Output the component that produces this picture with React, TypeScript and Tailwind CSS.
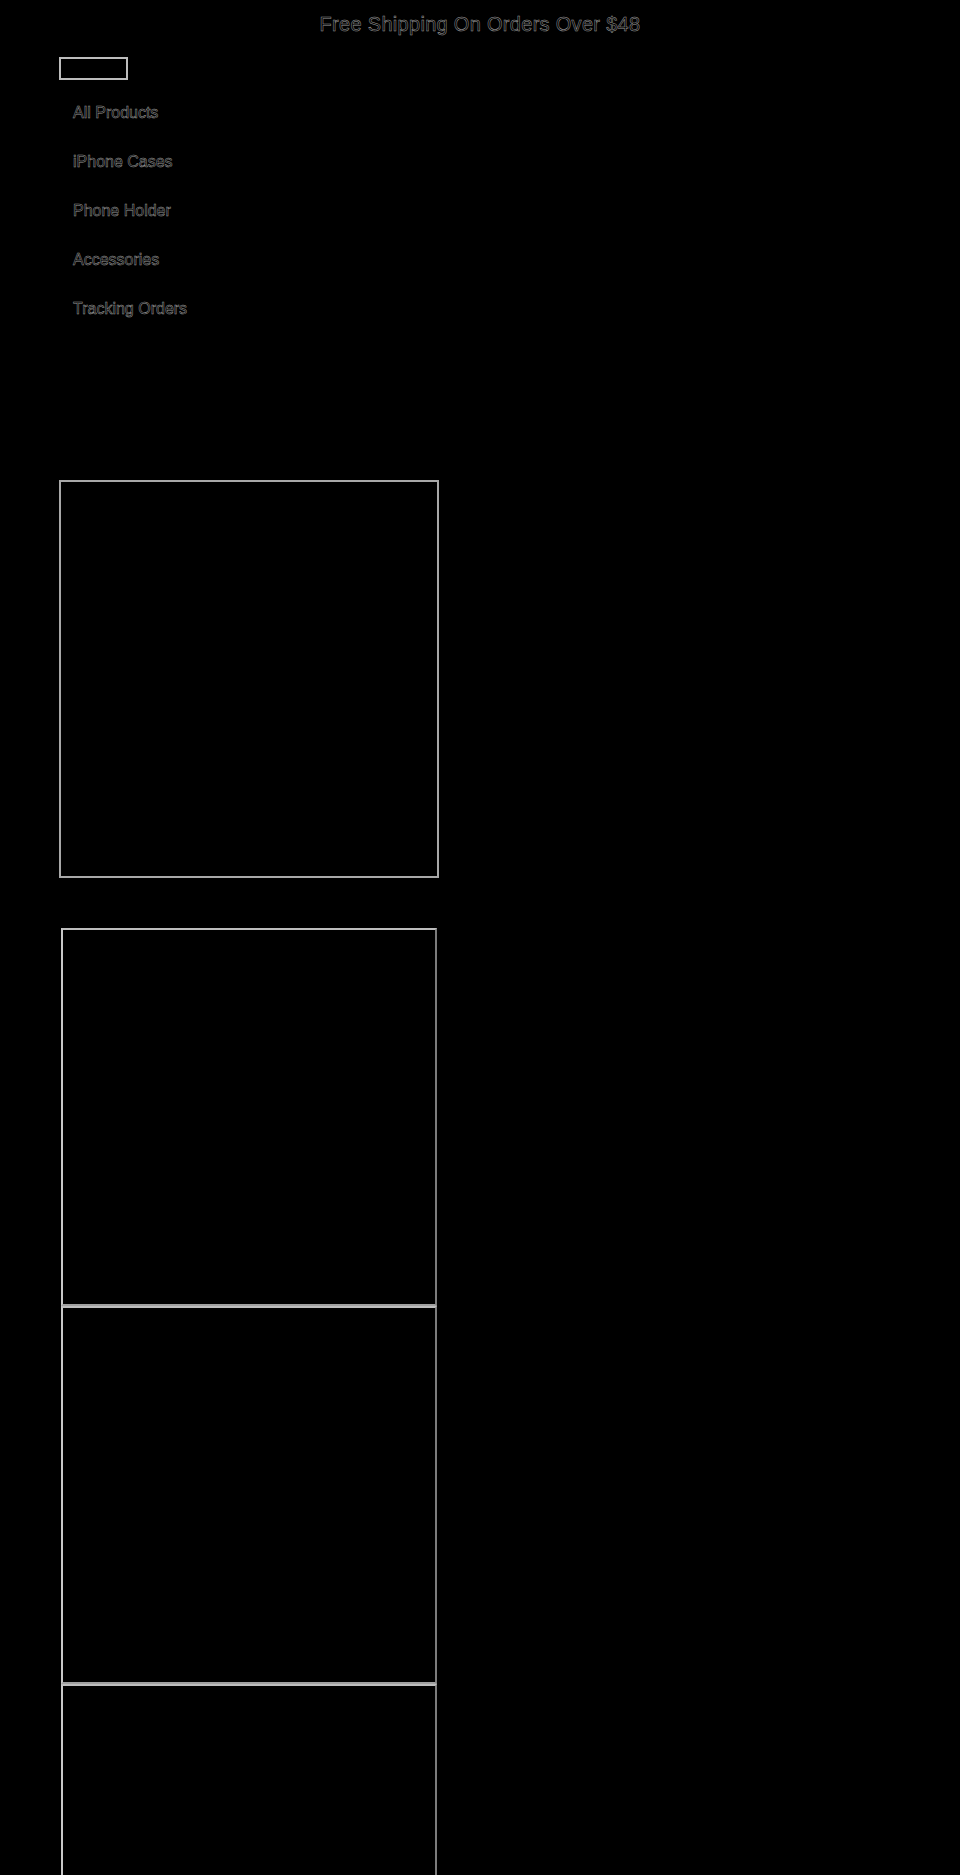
import React from "react";

const navItems = ["All Products", "iPhone Cases", "Phone Holder", "Accessories", "Tracking Orders"];

const outline = "text-black [-webkit-text-stroke:0.5px_#9c9c9c]";

export default function App() {
  return (
    <div className="min-h-[1875px] w-[960px] bg-black font-['Liberation_Sans',Arial,sans-serif] overflow-hidden">
      {/* announcement */}
      <div className="h-12 flex items-center justify-center">
        <p className={`text-[20px] leading-6 tracking-[0.3px] ${outline} [-webkit-text-stroke-color:#b8b8b8]`}>
          Free Shipping On Orders Over $48
        </p>
      </div>

      <div className="px-[59px]">
        <header className="pt-[9px]">
          <button className="block w-[69px] h-[23px] border-2 border-[#bdbdbd]" aria-label="menu"></button>
          <nav className="mt-2 flex flex-col">
            {navItems.map((item) => (
              <a key={item} href="#" className={`h-[49px] flex items-center pl-[14px] text-[16px] ${outline}`}>
                {item}
              </a>
            ))}
          </nav>
        </header>

        <section className="mt-[147px]">
          <div className="w-[380px] h-[398px] border-2 border-[#a8a8a8]"></div>
        </section>

        <section className="mt-[50px] pl-[2px] flex flex-col">
          {[0, 1, 2, 3].map((i) => (
            <div
              key={i}
              className="w-[376px] h-[378px] border-2 border-t-[#bdbdbd] border-b-[#a0a0a0] border-l-[#c8c8c8] border-r-[#7c7c7c]"
            ></div>
          ))}
        </section>
      </div>
    </div>
  );
}
